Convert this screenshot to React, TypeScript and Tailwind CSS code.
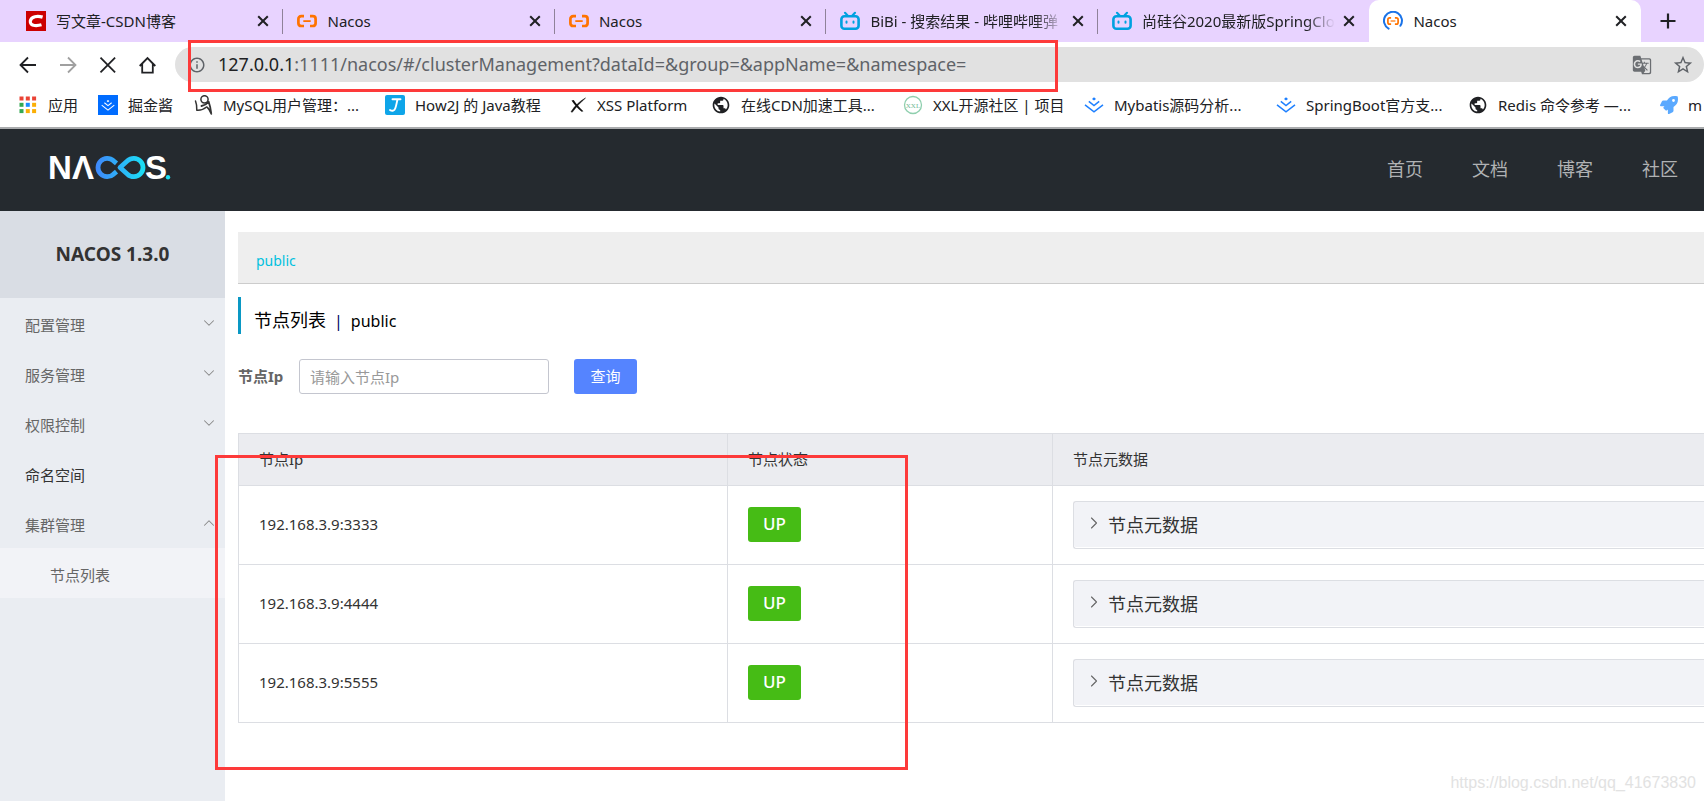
import type { ReactNode } from "react";
import { ChevronDown, ChevronRight, ChevronUp } from "lucide-react";
import { MdGTranslate, MdOutlineInfo, MdPublic, MdStarBorder } from "react-icons/md";
import { FaRocket } from "react-icons/fa";

function CsdnIcon() {
  return (
    <svg viewBox="0 0 20 20" className="size-5 shrink-0" aria-hidden="true">
      <rect width="20" height="20" fill="#cc0000" />
      <path d="M16.6 6.1c-2.6-.8-5.500-1-7.700-.4C6.300 6.400 4.600 8 4.300 10c-.3 2.500 1.300 4.200 4.200 4.500 2.500.2 5-.1 7-.7" fill="none" stroke="#fff" strokeWidth="3.200" />
    </svg>
  );
}

function NacosIcon() {
  return (
    <svg viewBox="0 0 20 20" className="size-5 shrink-0" aria-hidden="true">
      <g fill="none" stroke="#ff7300" strokeWidth="2.700">
        <path d="M7 5.200H4.300C2.500 5.200 1.400 6.300 1.400 8v4.200c0 1.700 1.100 2.800 2.900 2.800H7" />
        <path d="M13 5.200h2.700c1.800 0 2.900 1.100 2.900 2.800v4.200c0 1.700-1.100 2.800-2.900 2.800H13" />
        <path d="M6.300 10.100h7.400" strokeWidth="1.800" />
      </g>
    </svg>
  );
}

function NacosLoadingIcon() {
  return (
    <svg viewBox="0 0 20 20" className="size-5 shrink-0" aria-hidden="true">
      <path d="M5.600 17.600A9 9 0 1 1 17.400 14.800" fill="none" stroke="#1a73e8" strokeWidth="2" strokeLinecap="round" />
      <g fill="none" stroke="#ff7300" strokeWidth="1.700">
        <path d="M8.100 6.900H6.700C5.500 6.900 4.900 7.500 4.900 8.600v2.800c0 1.100.6 1.700 1.800 1.700h1.400" />
        <path d="M11.900 6.900h1.400c1.200 0 1.800.6 1.800 1.700v2.800c0 1.100-.6 1.700-1.800 1.700h-1.400" />
        <path d="M7.600 10h4.800" strokeWidth="1.200" />
      </g>
    </svg>
  );
}

function BilibiliIcon() {
  return (
    <svg viewBox="0 0 20 20" className="size-5 shrink-0" aria-hidden="true">
      <g fill="none" stroke="#00a1e0" strokeLinecap="round">
        <rect x="1.400" y="5.200" width="17.200" height="12.600" rx="3" strokeWidth="2.600" />
        <path d="M5 1.800 7.600 4.500M15 1.800l-2.600 2.700" strokeWidth="2.200" />
        <path d="M6.500 10.500v1.200M13.500 10.500v1.200" strokeWidth="2" />
      </g>
    </svg>
  );
}

function JuejinMark({ color }: { color: string }) {
  return (
    <g fill="none" stroke={color} strokeWidth="1.500">
      <path d="M10 2.300l2 1.600-2 1.600-2-1.600z" fill={color} stroke="none" />
      <path d="M4.800 6.400 10 10.500l5.200-4.100M1 9.800l9 7 9-7" />
    </g>
  );
}

function JuejinIcon() {
  return (
    <svg viewBox="0 0 20 20" className="size-5 shrink-0" aria-hidden="true">
      <JuejinMark color="#1e80ff" />
    </svg>
  );
}

function JuejinSquareIcon() {
  return (
    <svg viewBox="0 0 20 20" className="size-5 shrink-0" aria-hidden="true">
      <rect width="20" height="20" fill="#006cff" />
      <g transform="translate(3 3.300) scale(.7)">
        <JuejinMark color="#fff" />
      </g>
    </svg>
  );
}

function AppsIcon() {
  const colors = ["#ea4335", "#ea4335", "#ea4335", "#34a853", "#1a8cff", "#fbaf05", "#34a853", "#fbaf05", "#fbaf05"];
  return (
    <svg viewBox="0 0 20 20" className="size-5 shrink-0" aria-hidden="true">
      {colors.map((c, i) => (
        <rect key={i} x={1.500 + (i % 3) * 6.300} y={1.500 + Math.floor(i / 3) * 6.300} width="4" height="4" fill={c} />
      ))}
    </svg>
  );
}

function SketchIcon() {
  return (
    <svg viewBox="0 0 20 20" className="size-5 shrink-0" aria-hidden="true">
      <g fill="none" stroke="#333" strokeLinecap="round" strokeLinejoin="round">
        <circle cx="11.500" cy="4.300" r="3.600" strokeWidth="1.500" />
        <path d="M2.500 6c1.200 2.900 1.400 6 1.300 9.200 3.700.3 7.200-1 9.700-3.200" strokeWidth="1.500" />
        <path d="M8.500 11c3-.6 5.700-2.200 7.200-4.200 1.200 3.500 2.100 7.500 2.600 12-.9-2.700-2.300-5-4-6.400" strokeWidth="1.800" />
      </g>
    </svg>
  );
}

function How2jIcon() {
  return (
    <svg viewBox="0 0 20 20" className="size-5 shrink-0" aria-hidden="true">
      <rect width="20" height="20" rx="2" fill="#0ea5e9" />
      <path d="M7.500 4.300h8M12.500 4.300c-.8 3.500-1.300 6.500-2.200 9-.9 2.500-3 3.200-5.300 1.700" fill="none" stroke="#fff" strokeWidth="1.900" strokeLinecap="round" />
    </svg>
  );
}

function XssIcon() {
  return (
    <svg viewBox="0 0 20 20" className="size-5 shrink-0" aria-hidden="true">
      <path d="M18.500 3C13 6 8 10.500 4 16.700l1.200.6C9.200 12 13.500 7.500 18.500 3z" fill="#111" stroke="#111" strokeWidth=".5" />
      <path d="M4.500 5.500l2.200-.5c2.600 4 5.800 7.800 9.700 11.200l-1.700.5C10.600 13.400 7.300 9.800 4.500 5.500z" fill="#111" />
    </svg>
  );
}

function GlobeIcon() {
  return <MdPublic className="size-5 shrink-0 text-[#202124]" aria-hidden="true" />;
}

function XxlIcon() {
  return (
    <svg viewBox="0 0 20 20" className="size-5 shrink-0" aria-hidden="true">
      <circle cx="10" cy="10" r="8.500" fill="#fff" stroke="#8fcfae" strokeWidth="1.300" />
      <text x="10" y="12.500" textAnchor="middle" fontSize="7" fontFamily="Liberation Serif, serif" fill="#6fb894">
        XXL
      </text>
    </svg>
  );
}

function RocketIcon() {
  return <FaRocket className="size-[18px] shrink-0 text-[#5aa9ff]" aria-hidden="true" />;
}

function CloseIcon() {
  return (
    <svg viewBox="0 0 12 12" className="size-3" aria-hidden="true">
      <path d="M1.200 1.200l9.600 9.600M10.800 1.200l-9.600 9.600" stroke="#202124" strokeWidth="2" />
    </svg>
  );
}

function NacosLogo() {
  return (
    <svg viewBox="-4 -10 128 48" className="h-12 w-32" role="img" aria-label="NACOS">
      <defs>
        <linearGradient id="loop" gradientUnits="userSpaceOnUse" x1="45" y1="0" x2="95" y2="0">
          <stop offset="0" stopColor="#4086fb" />
          <stop offset="1" stopColor="#1ae0f5" />
        </linearGradient>
      </defs>
      <g fontFamily="Liberation Sans, sans-serif" fontWeight="700" fontSize="33" fill="#fff">
        <text x="-2" y="23">N</text>
        <text x="22" y="23">Λ</text>
        <text x="95" y="23">S</text>
      </g>
      <g fill="none" stroke="url(#loop)" strokeWidth="4.800" strokeLinejoin="round">
        <path d="M66.500 7.300 63.500 4.800A9.200 9.200 0 1 0 63.500 18.200l3-2.500" />
        <path d="M70 11.500 77.500 4.800A9.200 9.200 0 1 1 77.500 18.200z" />
      </g>
      <circle cx="118" cy="21.200" r="2.200" fill="#1ae0f5" />
    </svg>
  );
}

type TabInfo = { title: string; icon: ReactNode; divider: boolean; fade: boolean };

const tabs: TabInfo[] = [
  { title: "写文章-CSDN博客", icon: <CsdnIcon />, divider: true, fade: false },
  { title: "Nacos", icon: <NacosIcon />, divider: true, fade: false },
  { title: "Nacos", icon: <NacosIcon />, divider: true, fade: false },
  { title: "BiBi - 搜索结果 - 哔哩哔哩弹", icon: <BilibiliIcon />, divider: true, fade: true },
  { title: "尚硅谷2020最新版SpringClo", icon: <BilibiliIcon />, divider: false, fade: true },
];

const bookmarks = [
  { label: "应用", icon: <AppsIcon />, width: "w-[30px]" },
  { label: "掘金酱", icon: <JuejinSquareIcon />, width: "w-[45px]" },
  { label: "MySQL用户管理：...", icon: <SketchIcon />, width: "w-[142px]" },
  { label: "How2J 的 Java教程", icon: <How2jIcon />, width: "w-[132px]" },
  { label: "XSS Platform", icon: <XssIcon />, width: "w-[94px]" },
  { label: "在线CDN加速工具...", icon: <GlobeIcon />, width: "w-[142px]" },
  { label: "XXL开源社区 | 项目", icon: <XxlIcon />, width: "w-[131px]" },
  { label: "Mybatis源码分析...", icon: <JuejinIcon />, width: "w-[142px]" },
  { label: "SpringBoot官方支...", icon: <JuejinIcon />, width: "w-[142px]" },
  { label: "Redis 命令参考 —...", icon: <GlobeIcon />, width: "w-[142px]" },
  { label: "m", icon: <RocketIcon />, width: "w-[13px]" },
];

function TabStrip() {
  return (
    <div className="flex h-[42px] bg-[#e8d3ff] pl-3">
      <div className="flex min-w-0 max-w-[1629px] flex-1" role="tablist">
        {tabs.map((tab, i) => (
          <div key={i} className="flex w-1/6 items-center">
            <div role="tab" aria-selected="false" className="flex min-w-0 flex-1 items-center gap-[10px] pl-[14px]">
              {tab.icon}
              <span className={`min-w-0 flex-1 overflow-hidden text-[15px] whitespace-nowrap text-[#202124] ${tab.fade ? "mask-r-from-85%" : ""}`}>{tab.title}</span>
            </div>
            <button type="button" aria-label="关闭标签页" className="mr-[13px] ml-2">
              <CloseIcon />
            </button>
            <span className={tab.divider ? "h-[25px] w-px bg-[#8f8299]" : "w-px"} />
          </div>
        ))}
        <div className="flex w-1/6 items-center rounded-t-[10px] bg-white pr-[14px]">
          <div role="tab" aria-selected="true" className="flex min-w-0 flex-1 items-center gap-[10px] pl-[14px]">
            <NacosLoadingIcon />
            <span className="text-[15px] text-[#202124]">Nacos</span>
          </div>
          <button type="button" aria-label="关闭标签页">
            <CloseIcon />
          </button>
        </div>
      </div>
      <button type="button" aria-label="新标签页" className="flex w-[54px] items-center justify-center">
        <svg viewBox="0 0 16 16" className="size-4" aria-hidden="true">
          <path d="M8 .5v15M.5 8h15" stroke="#202124" strokeWidth="2.200" />
        </svg>
      </button>
    </div>
  );
}

function Toolbar() {
  const stroke = { fill: "none", strokeWidth: 1.8 };
  return (
    <div className="flex h-[45px] items-center bg-white pl-[18px]">
      <div className="flex gap-5">
        <button type="button" aria-label="后退">
          <svg viewBox="0 0 20 20" className="size-5" {...stroke} stroke="#202124">
            <path d="M18 10H2.500M10 2.500 2.500 10l7.500 7.500" />
          </svg>
        </button>
        <button type="button" aria-label="前进">
          <svg viewBox="0 0 20 20" className="size-5" {...stroke} stroke="#a0a0a0">
            <path d="M2 10h15.500M10 2.500l7.500 7.500-7.500 7.500" />
          </svg>
        </button>
        <button type="button" aria-label="停止加载">
          <svg viewBox="0 0 20 20" className="size-5" {...stroke} stroke="#202124">
            <path d="M2.500 2.700l14.600 14.600M17.100 2.700 2.500 17.300" />
          </svg>
        </button>
        <button type="button" aria-label="主页">
          <svg viewBox="0 0 20 20" className="size-5" {...stroke} stroke="#202124">
            <path d="M1.700 11 9.500 3l7.800 8M4.200 9v8.600h10.600V9" />
          </svg>
        </button>
      </div>
      <div className="ml-[17px] flex h-[35px] min-w-0 flex-1 items-center rounded-full bg-[#e1e1e1] pr-[10px] pl-[13px]">
        <MdOutlineInfo className="size-[18px] shrink-0 text-[#5f6368]" aria-hidden="true" />
        <p className="min-w-0 flex-1 pb-[2px] pl-3 text-[18px] leading-6 whitespace-nowrap text-[#5f6368]" aria-label="地址">
          <span className="text-[#202124]">127.0.0.1</span>:1111/nacos/#/clusterManagement?dataId=&amp;group=&amp;appName=&amp;namespace=
        </p>
        <button type="button" aria-label="翻译此页" className="mr-5">
          <MdGTranslate className="size-5 text-[#6b6e72]" />
        </button>
        <button type="button" aria-label="收藏">
          <MdStarBorder className="size-[22px] text-[#5f6368]" />
        </button>
      </div>
    </div>
  );
}

function BookmarkBar() {
  return (
    <nav aria-label="书签" className="flex h-[42px] items-center gap-5 overflow-hidden border-b-2 border-[#a9abad] bg-white pb-1 pl-[18px]">
      {bookmarks.map((b) => (
        <a key={b.label} href="#" className="flex shrink-0 items-center gap-[10px] text-[15px] text-[#202124]">
          {b.icon}
          <span className={`whitespace-nowrap ${b.width}`}>{b.label}</span>
        </a>
      ))}
    </nav>
  );
}

const menu = [
  { label: "配置管理", state: "closed" },
  { label: "服务管理", state: "closed" },
  { label: "权限控制", state: "closed" },
  { label: "命名空间", state: "leaf" },
  { label: "集群管理", state: "open" },
];

function Sidebar() {
  return (
    <aside className="w-[225px] shrink-0 bg-[#eaedf2]">
      <h1 className="flex h-[87px] items-center justify-center bg-[#d9dde4] text-[19px] font-bold text-[#333]">NACOS 1.3.0</h1>
      <ul className="text-[15px] text-[#666]">
        {menu.map((m) => (
          <li key={m.label}>
            <a href="#" className={`flex h-[50px] items-center justify-between pt-1 pr-[7px] pl-[25px] ${m.state === "leaf" ? "text-[#333]" : ""}`}>
              {m.label}
              {m.state === "closed" && <ChevronDown className="mb-1 size-[18px] text-[#888]" strokeWidth={1.400} />}
              {m.state === "open" && <ChevronUp className="mb-1 size-[18px] text-[#888]" strokeWidth={1.400} />}
            </a>
          </li>
        ))}
        <li className="bg-[#f2f3f7]">
          <a href="#" className="flex h-[50px] items-center pt-1 pl-[50px]">
            节点列表
          </a>
        </li>
      </ul>
    </aside>
  );
}

const nodes = ["192.168.3.9:3333", "192.168.3.9:4444", "192.168.3.9:5555"];

function NodeTable() {
  return (
    <table className="mt-[39px] w-full table-fixed border-collapse border border-r-0 border-[#dcdee3] text-left text-[15px] text-[#333]">
      <colgroup>
        <col className="w-[489px]" />
        <col className="w-[325px]" />
        <col />
      </colgroup>
      <thead>
        <tr className="h-[52px] bg-[#ebecf0]">
          <th className="border border-[#dcdee3] px-5 font-normal">节点Ip</th>
          <th className="border border-[#dcdee3] px-5 font-normal">节点状态</th>
          <th className="border border-r-0 border-[#dcdee3] px-5 font-normal">节点元数据</th>
        </tr>
      </thead>
      <tbody>
        {nodes.map((ip) => (
          <tr key={ip} className="h-[79px]">
            <td className="border border-[#dcdee3] px-5 pb-[2px]">{ip}</td>
            <td className="border border-[#dcdee3] px-5 pb-[2px]">
              <span className="inline-flex h-[35px] w-[53px] items-center justify-center rounded-[3px] bg-[#46bc15] align-middle text-[17px] font-medium text-white">UP</span>
            </td>
            <td className="border border-r-0 border-[#dcdee3] pl-5">
              <button type="button" aria-expanded="false" className="flex h-12 w-full items-center gap-1 rounded-l-[3px] border border-r-0 border-[#dcdee3] bg-[#f2f3f7] pl-[10px] text-[18px] shadow-[inset_0_-1px_0_#fff]">
                <ChevronRight className="mb-1 size-5 text-[#666]" strokeWidth={1.300} />
                节点元数据
              </button>
            </td>
          </tr>
        ))}
      </tbody>
    </table>
  );
}

export default function App() {
  return (
    <div className="relative flex min-h-screen flex-col overflow-hidden bg-white font-['Noto_Sans','Noto_Sans_CJK_SC',sans-serif]">
      <TabStrip />
      <Toolbar />
      <BookmarkBar />
      <header className="flex h-[82px] items-center justify-between bg-[#252a2f] pr-[26px] pl-[46px]">
        <a href="#" aria-label="Nacos">
          <NacosLogo />
        </a>
        <nav className="flex gap-[49px] pb-px text-[18px] text-[#b0b2b4]">
          <a href="#">首页</a>
          <a href="#">文档</a>
          <a href="#">博客</a>
          <a href="#">社区</a>
        </nav>
      </header>
      <div className="flex flex-1">
        <Sidebar />
        <main className="min-w-0 flex-1 pt-[21px] pl-[13px]">
          <div className="flex h-[52px] items-center border-b border-[#ccc] bg-[#eee] pt-[6px] pl-[18px] text-[14px]">
            <a href="#" className="text-[#00c1de]">
              public
            </a>
          </div>
          <h2 className="mt-[13px] flex h-[37px] items-center gap-2 border-l-[3px] border-[#0a98c4] pt-[10px] pl-[13px] text-[18px] text-black">
            <span>节点列表</span>
            <span className="text-[16px] text-[#000060]">|</span>
            <span className="text-[16px]">public</span>
          </h2>
          <form className="mt-[25px] flex items-center" onSubmit={(e) => e.preventDefault()}>
            <label htmlFor="node-ip" className="w-[61px] text-[15px] font-bold text-[#666]">
              节点Ip
            </label>
            <input id="node-ip" type="text" placeholder="请输入节点Ip" className="h-[35px] w-[250px] rounded-[3px] border border-[#c4c6cf] px-[10px] text-[15px] text-[#333] placeholder:text-[#999]" />
            <button type="submit" className="ml-[25px] h-[35px] w-[63px] rounded-[3px] bg-[#5584ff] text-[15px] text-white">
              查询
            </button>
          </form>
          <NodeTable />
        </main>
      </div>
      <div className="pointer-events-none absolute top-10 left-[188px] h-[52px] w-[870px] border-[3px] border-[#fd3a3a]" />
      <div className="pointer-events-none absolute top-[455px] left-[215px] h-[315px] w-[693px] border-[3px] border-[#fd3a3a]" />
      <p className="pointer-events-none absolute right-2 bottom-2 font-['Liberation_Sans',sans-serif] text-[16px] leading-5 text-[#e2e2e2]">https://blog.csdn.net/qq_41673830</p>
    </div>
  );
}
